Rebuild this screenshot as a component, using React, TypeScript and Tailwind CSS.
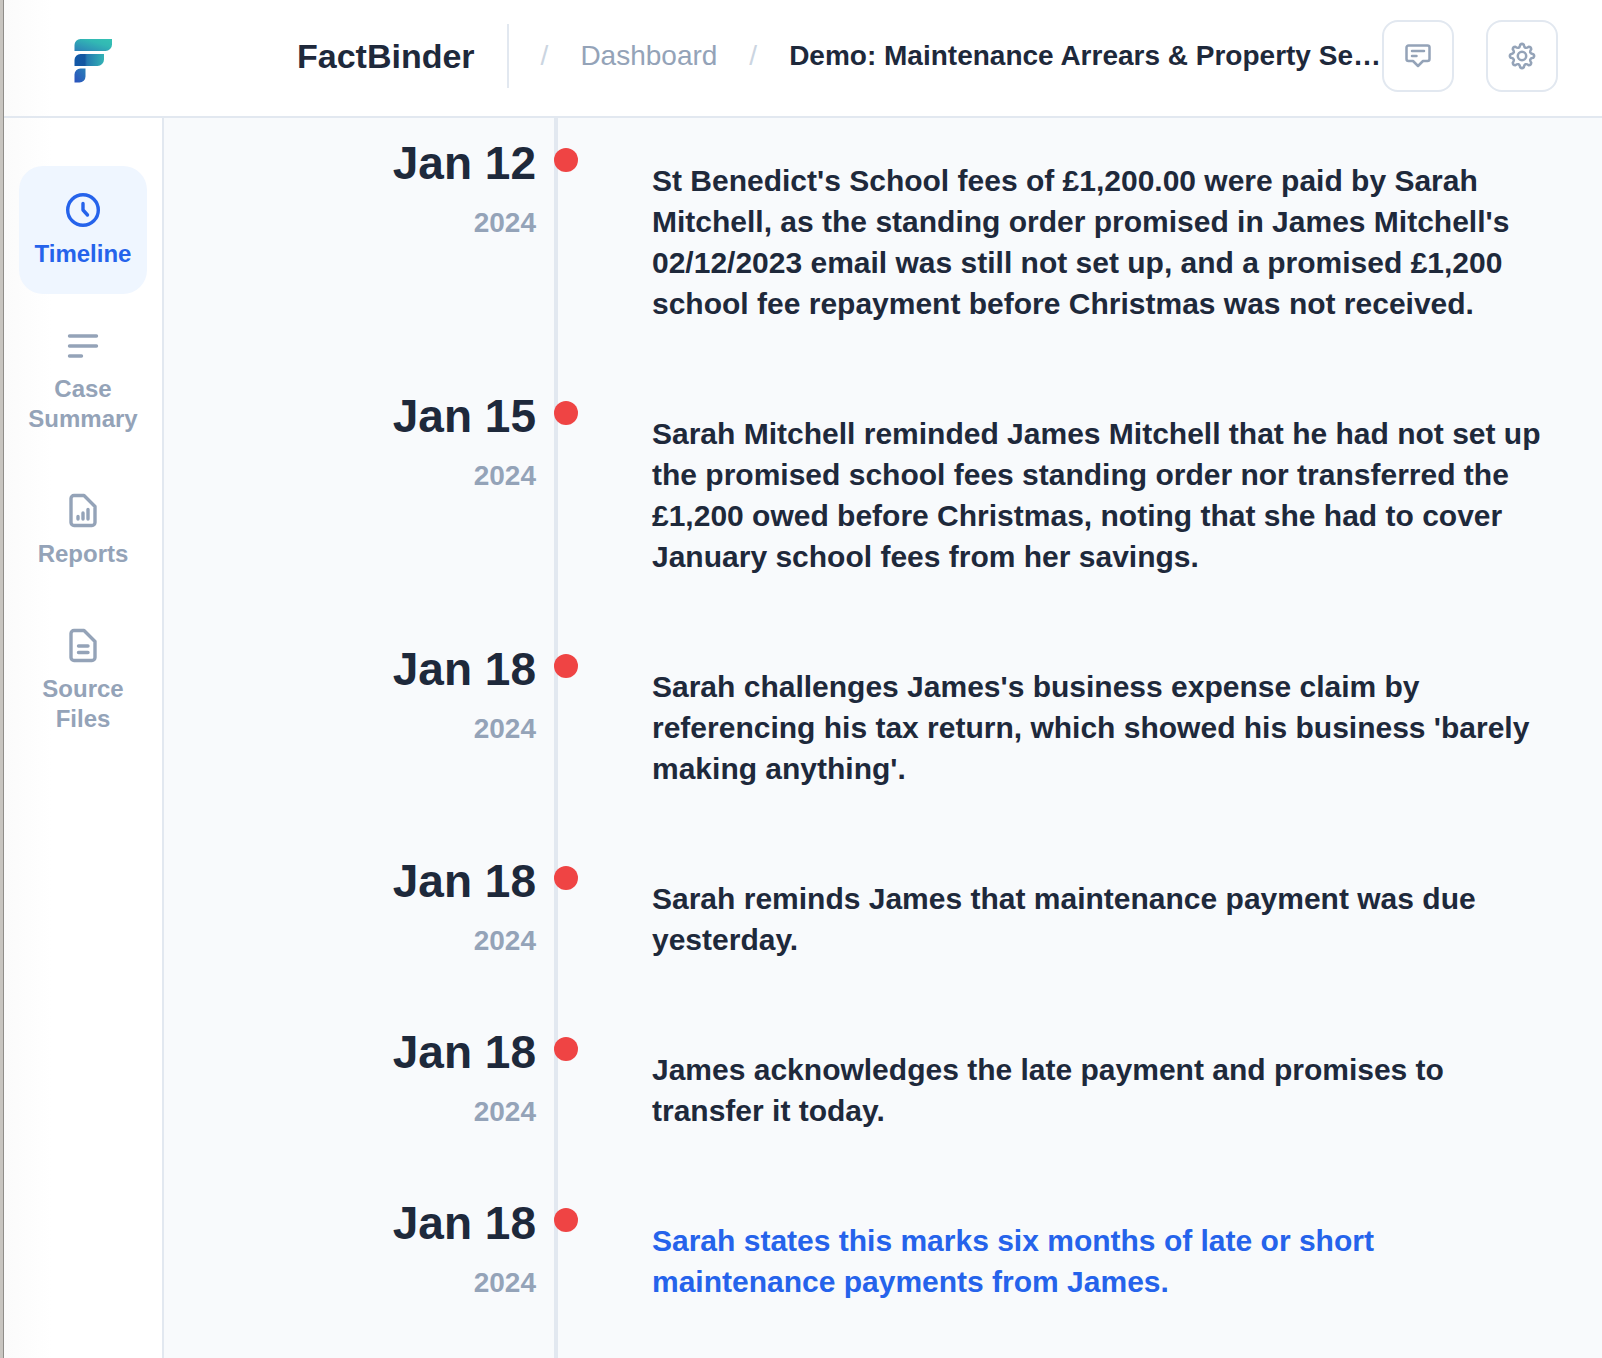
import type { ReactNode } from "react";
import clsx from "clsx";

const events = [
  {
    day: "Jan 12",
    year: "2024",
    text: "St Benedict's School fees of £1,200.00 were paid by Sarah Mitchell, as the standing order promised in James Mitchell's 02/12/2023 email was still not set up, and a promised £1,200 school fee repayment before Christmas was not received.",
  },
  {
    day: "Jan 15",
    year: "2024",
    text: "Sarah Mitchell reminded James Mitchell that he had not set up the promised school fees standing order nor transferred the £1,200 owed before Christmas, noting that she had to cover January school fees from her savings.",
  },
  {
    day: "Jan 18",
    year: "2024",
    text: "Sarah challenges James's business expense claim by referencing his tax return, which showed his business 'barely making anything'.",
  },
  { day: "Jan 18", year: "2024", text: "Sarah reminds James that maintenance payment was due yesterday." },
  { day: "Jan 18", year: "2024", text: "James acknowledges the late payment and promises to transfer it today." },
  {
    day: "Jan 18",
    year: "2024",
    text: "Sarah states this marks six months of late or short maintenance payments from James.",
    active: true,
  },
];

function Logo() {
  return (
    <svg viewBox="0 0 38 44" className="h-11 w-[38px]" aria-hidden="true">
      <defs>
        <linearGradient id="top" x1="0" y1="1" x2="1" y2="0">
          <stop offset="0" stopColor="#2d7fb8" />
          <stop offset="0.65" stopColor="#32b8b4" />
          <stop offset="1" stopColor="#35c2b4" />
        </linearGradient>
        <linearGradient id="mid" x1="0" y1="0" x2="1" y2="0">
          <stop offset="0" stopColor="#1258a8" />
          <stop offset="0.35" stopColor="#1457a0" />
          <stop offset="0.42" stopColor="#2478b0" />
          <stop offset="1" stopColor="#33b3b5" />
        </linearGradient>
        <linearGradient id="low" x1="0" y1="1" x2="1" y2="0">
          <stop offset="0" stopColor="#2b50bd" />
          <stop offset="1" stopColor="#2a80b8" />
        </linearGradient>
      </defs>
      <path d="M6.5 0H38V5.5A6.5 6.5 0 0 1 31.5 12H.5V6A6 6 0 0 1 6.5 0Z" fill="url(#top)" />
      <path d="M6.5 15H30V20.5A6.5 6.5 0 0 1 23.500 27H.5V21A6 6 0 0 1 6.5 15Z" fill="url(#mid)" />
      <path d="M6.5 29.500H11.500V37.5A6 6 0 0 1 5.5 43.5H.5V35.5A6 6 0 0 1 6.5 29.5Z" fill="url(#low)" />
    </svg>
  );
}

function NavIcon({ children }: { children: ReactNode }) {
  return (
    <svg
      viewBox="0 0 40 40"
      className="size-10"
      fill="none"
      stroke="currentColor"
      strokeWidth="3.4"
      strokeLinecap="round"
      strokeLinejoin="round"
      aria-hidden="true"
    >
      {children}
    </svg>
  );
}

const filePath = "M11 4.5H21L32 15.500V31.5A3 3 0 0 1 29 34.5H11A3 3 0 0 1 8 31.5V7.5A3 3 0 0 1 11 4.5Z";

const navItems = [
  {
    label: "Timeline",
    active: true,
    icon: (
      <>
        <circle cx="20" cy="19" r="15.3" />
        <path d="M20 12.5V19L24.5 24" />
      </>
    ),
  },
  { label: "Case Summary", icon: <path d="M6.500 10H33.500M6.500 20H33.500M6.500 30H18.500" /> },
  {
    label: "Reports",
    icon: (
      <>
        <path d={filePath} />
        <path d="M15 25.500V28M20 22V28M25 18.500V28" />
      </>
    ),
  },
  {
    label: "Source Files",
    icon: (
      <>
        <path d={filePath} />
        <path d="M15.500 20H25M15.500 26.500H25" />
      </>
    ),
  },
];

// eight rounded teeth joined by scooped valleys
function gearPath(c: number) {
  const at = (deg: number, r: number) => {
    const a = (deg * Math.PI) / 180;
    return `${(c + r * Math.cos(a)).toFixed(2)} ${(c + r * Math.sin(a)).toFixed(2)}`;
  };
  let d = `M${at(-9, 11.4)}`;
  for (let k = 0; k < 8; k++) {
    const t = k * 45;
    d += `Q${at(t, 13)} ${at(t + 9, 11.4)}Q${at(t + 22.5, 6.8)} ${at(t + 36, 11.4)}`;
  }
  return d + "Z";
}

function IconButton({ label, children }: { label: string; children: ReactNode }) {
  return (
    <button
      type="button"
      aria-label={label}
      className="flex size-18 shrink-0 items-center justify-center rounded-2xl border-2 border-[#e2e8f0] bg-white text-[#94a3b8]"
    >
      <svg
        viewBox="0 0 28 28"
        className="size-7"
        fill="none"
        stroke="currentColor"
        strokeWidth="2.5"
        strokeLinecap="round"
        strokeLinejoin="round"
        aria-hidden="true"
      >
        {children}
      </svg>
    </button>
  );
}

function Header() {
  return (
    <header className="flex items-center border-b-2 border-[#e2e8f0] pt-5 pr-11 pb-6">
      <div className="flex w-[178px] shrink-0 justify-center pt-2.5">
        <Logo />
      </div>
      <span className="ml-[115px] shrink-0 text-[34px] leading-10 font-bold text-[#1e293b]">FactBinder</span>
      <div className="ml-8 h-16 w-0.5 shrink-0 bg-[#e2e8f0]" />
      <nav aria-label="Breadcrumb" className="ml-8 flex min-w-0 flex-1 items-center gap-8 text-[28px] leading-10">
        <span className="text-[#cbd5e1]">/</span>
        <a href="#dashboard" className="text-[#94a3b8]">
          Dashboard
        </a>
        <span className="text-[#cbd5e1]">/</span>
        <span className="font-bold whitespace-nowrap text-[#1e293b]">
          Demo: Maintenance Arrears &amp; Property Se…
        </span>
      </nav>
      <div className="flex shrink-0 gap-8">
        <IconButton label="Feedback">
          <path d="M4.500 3.500H23.500A2 2 0 0 1 25.500 5.500V17A2 2 0 0 1 23.500 19H19L14 24L9 19H4.500A2 2 0 0 1 2.500 17V5.500A2 2 0 0 1 4.500 3.500Z" />
          <path d="M8 9H20M8 14H12.500" />
        </IconButton>
        <IconButton label="Settings">
          <path d={gearPath(14)} />
          <circle cx="14" cy="14" r="4.2" />
        </IconButton>
      </div>
    </header>
  );
}

function Sidebar() {
  return (
    <aside className="w-40 shrink-0 border-r-2 border-[#e2e8f0] pt-12">
      <nav className="flex flex-col items-center gap-[22px]">
        {navItems.map((item) => (
          <a
            key={item.label}
            href={`#${item.label.toLowerCase().replace(" ", "-")}`}
            aria-current={item.active ? "page" : undefined}
            className={clsx(
              "flex size-32 flex-col items-center justify-center gap-2 rounded-3xl text-center text-[24px] leading-[30px] font-bold",
              item.active ? "bg-[#eff6ff] text-[#2563eb]" : "text-[#94a3b8]",
            )}
          >
            <NavIcon>{item.icon}</NavIcon>
            <span>{item.label}</span>
          </a>
        ))}
      </nav>
    </aside>
  );
}

function Timeline() {
  return (
    <main className="flex min-w-0 flex-1 flex-col bg-[#f8fafc]">
      <ol className="flex flex-1 flex-col">
        {events.map((e, i) => (
          <li key={i} className="flex last:flex-1">
            <div className="w-[372px] shrink-0 pt-[15px] text-right font-bold">
              <div className="text-[46px] leading-[60px] text-[#1e293b]">{e.day}</div>
              <div className="mt-2.5 text-[28px] leading-10 text-[#94a3b8]">{e.year}</div>
            </div>
            <div className="ml-[18px] w-1 shrink-0 bg-[#e2e8f0] pt-[30px]">
              <div className="size-6 rounded-full bg-[#ef4444]" />
            </div>
            <p
              className={clsx(
                "mr-12 ml-[94px] min-w-0 flex-1 pt-[42px] pb-[47px] text-[30px] leading-[41px] font-bold",
                e.active ? "text-[#2563eb]" : "text-[#1e293b]",
              )}
            >
              {e.text}
            </p>
          </li>
        ))}
      </ol>
    </main>
  );
}

export default function App() {
  return (
    <div className="flex min-h-screen bg-white font-['Liberation_Sans',Arial,sans-serif]">
      <div className="w-1 shrink-0 border-r border-[#8f8d89] bg-[#c8c5c0]" />
      <div className="flex min-w-0 flex-1 flex-col bg-linear-to-r from-[#fbfbfb] to-white to-[48px]">
        <Header />
        <div className="flex flex-1">
          <Sidebar />
          <Timeline />
        </div>
      </div>
    </div>
  );
}
